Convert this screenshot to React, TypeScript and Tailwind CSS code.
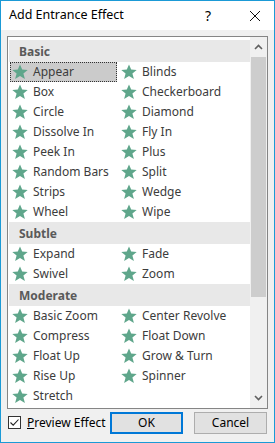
import React from 'react';

const groups: { name: string; items: string[] }[] = [
  {
    name: 'Basic',
    items: ['Appear', 'Blinds', 'Box', 'Checkerboard', 'Circle', 'Diamond', 'Dissolve In', 'Fly In', 'Peek In', 'Plus', 'Random Bars', 'Split', 'Strips', 'Wedge', 'Wheel', 'Wipe'],
  },
  { name: 'Subtle', items: ['Expand', 'Fade', 'Swivel', 'Zoom'] },
  {
    name: 'Moderate',
    items: ['Basic Zoom', 'Center Revolve', 'Compress', 'Float Down', 'Float Up', 'Grow & Turn', 'Rise Up', 'Spinner', 'Stretch'],
  },
];

function Star() {
  return (
    <svg width="16" height="16" viewBox="0 0 16 16" className="shrink-0">
      <polygon points="8,0.5 10.2,5.6 15.7,5.9 11.4,9.4 12.9,15 8,11.9 3.1,15 4.6,9.4 0.3,5.9 5.8,5.6" fill="#5fa68b" />
    </svg>
  );
}

function Item({ label, selected }: { label: string; selected?: boolean }) {
  return (
    <div
      className={`h-[20px] flex items-center gap-[5px] pl-[2px] mr-[2px] ${
        selected ? 'bg-[#cbcbcb] outline-1 outline-dotted outline-[#333] -outline-offset-1' : ''
      }`}
    >
      <Star />
      <span className="text-[#3c3c3c] whitespace-nowrap">{label}</span>
    </div>
  );
}

export default function App() {
  return (
    <div
      className="w-[275px] h-[443px] border border-[#1b9ad6] bg-[#f0f0f0] flex flex-col text-[12px] select-none"
      style={{ fontFamily: '"Noto Sans", "Open Sans", sans-serif' }}
    >
      {/* title bar */}
      <div className="h-[29px] bg-white flex items-center shrink-0">
        <span className="pl-[8px] text-[12.5px] text-black flex-1">Add Entrance Effect</span>
        <span className="w-[14px] text-[14px] text-black mr-[30px]">?</span>
        <svg width="12" height="12" viewBox="0 0 12 12" className="mr-[13px]">
          <path d="M1 1 L11 11 M11 1 L1 11" stroke="#111" strokeWidth="1" />
        </svg>
      </div>

      {/* list box */}
      <div className="mx-[6px] mt-[6px] h-[373px] border border-[#858585] bg-white flex">
        <div className="flex-1 pt-[3px] pl-[1px] overflow-hidden">
          {groups.map((g) => (
            <div key={g.name}>
              <div className="h-[22px] bg-[#e8e8e8] flex items-center pl-[10px] pt-[1px] font-bold text-[#5a5a5a]">{g.name}</div>
              <div className="grid grid-cols-[109px_1fr] pl-[1px]">
                {g.items.map((it, i) => (
                  <Item key={it} label={it} selected={g.name === 'Basic' && i === 0} />
                ))}
              </div>
            </div>
          ))}
        </div>
        {/* scrollbar */}
        <div className="w-[17px] bg-[#f0f0f0] flex flex-col shrink-0">
          <div className="h-[20px] flex items-center justify-center">
            <svg width="9" height="6" viewBox="0 0 9 6">
              <path d="M1 5 L4.5 1.5 L8 5" stroke="#606060" strokeWidth="1.6" fill="none" />
            </svg>
          </div>
          <div className="h-[240px] mx-[1px] bg-[#cdcdcd]" />
          <div className="flex-1" />
          <div className="h-[20px] flex items-center justify-center">
            <svg width="9" height="6" viewBox="0 0 9 6">
              <path d="M1 1 L4.5 4.5 L8 1" stroke="#606060" strokeWidth="1.6" fill="none" />
            </svg>
          </div>
        </div>
      </div>

      {/* bottom row */}
      <div className="flex items-center mt-[2px] pl-[7px] pr-[7px] h-[23px]">
        <div className="w-[13px] h-[13px] border border-[#333] bg-white flex items-center justify-center">
          <svg width="11" height="11" viewBox="0 0 11 11">
            <path d="M1.5 5.5 L4.2 8.2 L9.5 2.5" stroke="#222" strokeWidth="1.1" fill="none" />
          </svg>
        </div>
        <span className="ml-[6px] text-black">
          <span className="underline">P</span>review Effect
        </span>
        <div className="flex-1" />
        <button className="w-[73px] h-[22px] border-2 border-[#0078d7] bg-[#e1e1e1] text-black text-[12px]">OK</button>
        <button className="ml-[11px] w-[73px] h-[22px] border border-[#adadad] bg-[#e1e1e1] text-black text-[12px]">Cancel</button>
      </div>
    </div>
  );
}
